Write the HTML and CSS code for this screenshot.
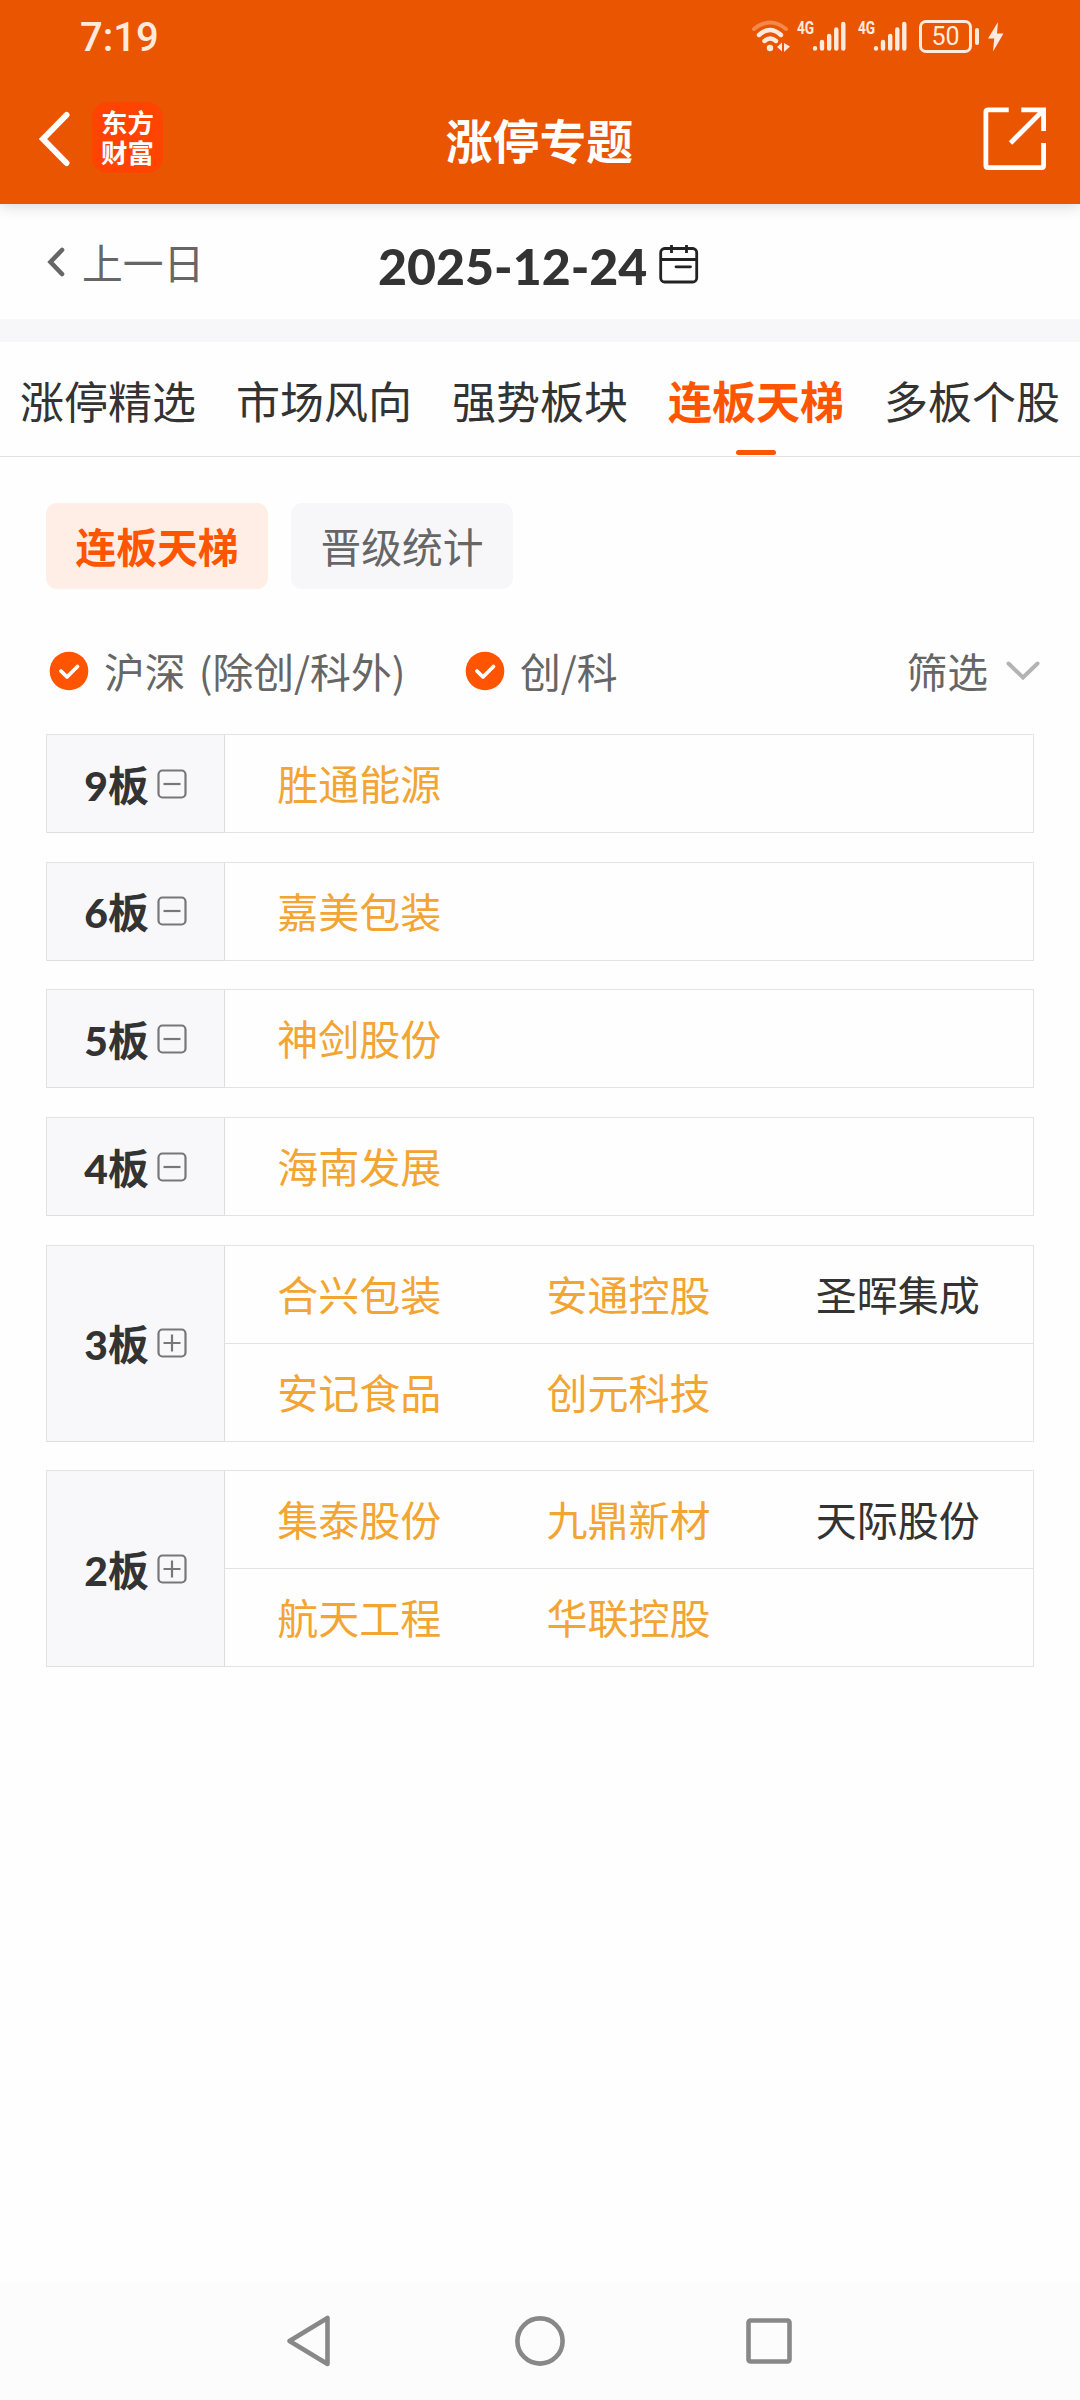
FILE: index.html
```html
<!DOCTYPE html>
<html lang="zh-CN">
<head>
<meta charset="UTF-8">
<meta name="viewport" content="width=device-width, initial-scale=1.0">
<title>涨停专题</title>
<link rel="stylesheet" href="styles.css">
</head>
<body>

<header class="header">
  <div class="status">
    <span class="time">7:19</span>
    <div class="status-icons">
      <svg class="wifi" width="40" height="34" viewBox="0 0 40 34" fill="none" stroke="#ffeadd" stroke-width="4.4" stroke-linecap="round">
        <path d="M3 10 Q19 -3 35 10" stroke="#f5874a" stroke-width="4"/>
        <path d="M8 16 Q19 6 30 16"/>
        <path d="M13.500 22 Q19 17 25 22"/>
        <circle cx="19" cy="29" r="3.200" fill="#ffeadd" stroke="none"/>
        <path d="M26 28 l5 -4.500 v9z M33 24 v9 l6 -5.500z" fill="#ffeadd" stroke="none"/>
      </svg>
      <div class="signal">
        <span>4G</span>
        <svg width="36" height="34" viewBox="0 0 36 34" stroke="#ffeadd" stroke-width="4.400" stroke-linecap="round">
          <path d="M3 29.200 v.4 M10 23 v6.500 M17.200 17 v12.500 M24.300 10.500 v19 M31.300 5 v24.500"/>
        </svg>
      </div>
      <div class="signal">
        <span>4G</span>
        <svg width="36" height="34" viewBox="0 0 36 34" stroke="#ffeadd" stroke-width="4.400" stroke-linecap="round">
          <path d="M3 29.200 v.4 M10 23 v6.500 M17.200 17 v12.500 M24.300 10.500 v19 M31.300 5 v24.500"/>
        </svg>
      </div>
      <div class="battery">50</div>
      <div class="battery-tip"></div>
      <svg class="bolt" width="16" height="30" viewBox="0 0 16 30" fill="#ffeadd">
        <path d="M10 0 L0 16.500 H6.200 L5 29.500 L15.500 11.500 H9z"/>
      </svg>
    </div>
  </div>
  <div class="navbar">
    <div class="nav-left">
      <svg width="32" height="56" viewBox="0 0 32 56" fill="none" stroke="#fff" stroke-width="6">
        <path d="M28.500 4 L5 28 L28.500 52" stroke-linecap="round"/>
      </svg>
      <div class="logo">东方<br>财富</div>
    </div>
    <h1>涨停专题</h1>
    <svg class="share" width="64" height="64" viewBox="0 0 64 64" fill="none" stroke="#fff" stroke-width="4.800">
      <path d="M25.700 2.900 H5 Q2.900 2.900 2.900 5 V58.500 Q2.900 60.600 5 60.600 H58.500 Q60.600 60.600 60.600 58.500 V36"/>
      <path d="M38.300 2.900 H60.600 V24 M60 3.500 L27.500 36"/>
    </svg>
  </div>
</header>

<div class="date-bar">
  <div class="prev">
    <svg width="20" height="32" viewBox="0 0 20 32" fill="none" stroke="#666" stroke-width="4.600" stroke-linecap="round">
      <path d="M16 4 L4.500 16 L16 28"/>
    </svg>
    <span>上一日</span>
  </div>
  <div class="date">
    <span>2025-12-24</span>
    <svg width="40" height="40" viewBox="0 0 40 40" fill="none" stroke="#222" stroke-width="2.800">
      <rect x="1.700" y="4.500" width="36" height="33.500" rx="4"/>
      <path d="M2 15.500 H37 M12.500 1 V9 M27.500 1 V9"/>
      <path d="M17 22.800 H31.500" stroke-linecap="round"/>
    </svg>
  </div>
</div>

<div class="tabs">
  <span>涨停精选</span>
  <span>市场风向</span>
  <span>强势板块</span>
  <span class="active">连板天梯</span>
  <span>多板个股</span>
</div>

<main class="content">
  <div class="chips">
    <span class="chip active">连板天梯</span>
    <span class="chip">晋级统计</span>
  </div>

  <div class="filters">
    <div class="check">
      <svg width="40" height="40" viewBox="0 0 40 40"><circle cx="20" cy="20" r="19.300" fill="#ff5500"/><path d="M12 20 L18 26 L28.500 15.500" fill="none" stroke="#fff" stroke-width="3.800" stroke-linecap="round" stroke-linejoin="round"/></svg>
      <span>沪深 (除创/科外)</span>
    </div>
    <div class="check">
      <svg width="40" height="40" viewBox="0 0 40 40"><circle cx="20" cy="20" r="19.300" fill="#ff5500"/><path d="M12 20 L18 26 L28.500 15.500" fill="none" stroke="#fff" stroke-width="3.800" stroke-linecap="round" stroke-linejoin="round"/></svg>
      <span>创/科</span>
    </div>
    <div class="select">
      <span>筛选</span>
      <svg width="34" height="20" viewBox="0 0 34 20" fill="none" stroke="#b3b3b3" stroke-width="4" stroke-linecap="round"><path d="M2.500 2.500 L17 16.500 L31.500 2.500"/></svg>
    </div>
  </div>

  <div class="ladder" id="ladder"></div>
</main>

<footer class="system-nav">
  <svg width="50" height="60" viewBox="0 0 50 60" fill="none" stroke="#888" stroke-width="4.600" stroke-linejoin="round">
    <path d="M5.500 30 L43.500 7 V53z"/>
  </svg>
  <svg width="60" height="60" viewBox="0 0 60 60" fill="none" stroke="#888" stroke-width="4.600">
    <circle cx="30" cy="30" r="22.600"/>
  </svg>
  <svg width="50" height="60" viewBox="0 0 50 60" fill="none" stroke="#888" stroke-width="4.600">
    <rect x="2.500" y="9.500" width="41" height="41" rx="2"/>
  </svg>
</footer>

<script>
  var levels = [
    { n: 9, open: true, rows: [['胜通能源']] },
    { n: 6, open: true, rows: [['嘉美包装']] },
    { n: 5, open: true, rows: [['神剑股份']] },
    { n: 4, open: true, rows: [['海南发展']] },
    { n: 3, open: false, rows: [['合兴包装', '安通控股', '圣晖集成'], ['安记食品', '创元科技']] },
    { n: 2, open: false, rows: [['集泰股份', '九鼎新材', '天际股份'], ['航天工程', '华联控股']] }
  ];
  // 这些显示为黑色，其余为橙色
  var normal = ['圣晖集成', '天际股份'];

  function toggleIcon(open) {
    return '<svg width="30" height="30" viewBox="0 0 30 30" fill="none" stroke="#777" stroke-width="2.200">' +
      '<rect x="1.500" y="1.500" width="27" height="27" rx="4"/>' +
      '<path d="M6.500 15 H23.500' + (open ? '' : ' M15 6.500 V23.500') + '"/></svg>';
  }

  document.getElementById('ladder').innerHTML = levels.map(function(level) {
    var rows = level.rows.map(function(row) {
      return '<div class="row">' + row.map(function(name) {
        var cls = normal.indexOf(name) >= 0 ? 'stock' : 'stock hot';
        return '<span class="' + cls + '">' + name + '</span>';
      }).join('') + '</div>';
    }).join('');
    return '<div class="level"><div class="level-name"><span><b>' + level.n + '</b>板</span>' +
      toggleIcon(level.open) + '</div><div class="rows">' + rows + '</div></div>';
  }).join('');
</script>

</body>
</html>
```
FILE: styles.css
```css
* {
  box-sizing: border-box;
}
html, body {
  margin: 0;
  padding: 0;
}
body {
  height: 2400px;
  display: flex;
  flex-direction: column;
  background-color: #fefefe;
  color: #333;
  font-family: "Noto Sans CJK SC", sans-serif;
  font-size: 40.8px;
}
svg {
  display: block;
  flex: none;
}

/* 顶部 */
.header {
  height: 204px;
  background-color: #ea5502;
  color: #fff;
  box-shadow: 0 2px 14px rgba(0,0,0,0.16);
}
.status {
  height: 72px;
  padding: 0 76px 0 80px;
  display: flex;
  justify-content: space-between;
  color: #ffeadd;
}
.time {
  font: 500 40px/76px Roboto, sans-serif;
}
.status-icons {
  padding-top: 19px;
  display: flex;
  align-items: flex-start;
}
.wifi {
  margin-right: 6px;
}
.signal {
  width: 61px;
  display: flex;
}
.signal span {
  width: 15px;
  height: 18px;
  font: bold 19px/18px Roboto, sans-serif;
  transform: scaleX(0.72);
  transform-origin: left;
}
.battery {
  width: 53px;
  height: 33px;
  margin-top: 1px;
  border: 3px solid #ffeadd;
  border-radius: 7px;
  font: 25px/27px Roboto, sans-serif;
  text-align: center;
}
.battery-tip {
  width: 4px;
  height: 17px;
  margin: 9px 9px 0 3px;
  border-radius: 2px;
  background-color: #ffeadd;
}
.bolt {
  margin-top: 3px;
}
.navbar {
  height: 132px;
  padding: 2px 33px 0 38px;
  display: flex;
  align-items: center;
  justify-content: space-between;
}
.nav-left {
  flex: 1;
  display: flex;
  align-items: center;
  gap: 22px;
}
.logo {
  width: 71px;
  height: 71px;
  margin-top: -3px;
  padding-top: 5px;
  border-radius: 16px;
  background-color: #ff4300;
  font-size: 26.500px;
  font-weight: bold;
  line-height: 30px;
  text-align: center;
}
h1 {
  margin: 0;
  font-size: 46.800px;
  font-weight: bold;
  line-height: 60px;
}
.navbar .share {
  margin-left: 350px;
}

/* 日期 */
.date-bar {
  height: 115px;
  padding-left: 46px;
  display: flex;
  align-items: center;
}
.prev {
  width: 332px;
  display: flex;
  align-items: center;
  gap: 16px;
  color: #666;
}
.prev span {
  line-height: 60px;
}
.date {
  display: flex;
  align-items: center;
  gap: 12px;
  padding-top: 4px;
}
.date span {
  font: 900 50px/60px Lato, sans-serif;
  padding-top: 5px;
}

/* 标签页 */
.tabs {
  height: 138px;
  padding: 0 20px;
  border-top: 23px solid #f7f7fa;
  border-bottom: 1px solid #e0e0e0;
  display: flex;
  gap: 40px;
  font-size: 44px;
  line-height: 117px;
  white-space: nowrap;
}
.tabs .active {
  position: relative;
  color: #ff5500;
  font-weight: bold;
}
.tabs .active::after {
  content: "";
  position: absolute;
  left: 68px;
  bottom: 1px;
  width: 40px;
  height: 5px;
  border-radius: 3px;
  background-color: #ff5500;
}

.content {
  flex: 1;
  padding: 46px 46px 0;
}
.chips {
  display: flex;
  gap: 23px;
}
.chip {
  width: 222px;
  height: 86px;
  border-radius: 11px;
  background-color: #f7f7fa;
  color: #666;
  line-height: 86px;
  text-align: center;
}
.chip.active {
  background-color: #ffeee6;
  color: #ff5500;
  font-weight: bold;
}
.filters {
  height: 60px;
  margin: 52px -6px 33px 3px;
  display: flex;
  align-items: center;
  color: #666;
  line-height: 60px;
}
.check {
  width: 416px;
  display: flex;
  align-items: center;
  gap: 15px;
  white-space: nowrap;
}
.check:first-child span {
  word-spacing: 4px;
}
.select {
  margin-left: auto;
  display: flex;
  align-items: center;
  gap: 18px;
}

/* 连板天梯 */
.ladder {
  display: flex;
  flex-direction: column;
  gap: 28.700px;
}
.level {
  display: flex;
  border: 1px solid #e3e3e3;
  border-bottom: none;
}
.level-name {
  width: 178px;
  display: flex;
  align-items: center;
  justify-content: center;
  gap: 8px;
  background-color: #f8f8fb;
  border-right: 1px solid #dedede;
  border-bottom: 1px solid #dedede;
  font-weight: bold;
}
.level-name span {
  margin-top: -1px;
}
.level-name b {
  font-family: Lato, sans-serif;
  font-weight: 900;
}
.rows {
  flex: 1;
}
.row {
  height: 98px;
  display: grid;
  grid-template-columns: repeat(3, 1fr);
  border-bottom: 1px solid #e3e3e3;
  font-size: 41px;
  line-height: 95px;
  text-align: center;
}
.stock {
  padding-right: 1px;
}
.stock.hot {
  color: #f2a533;
}

/* 系统导航 */
.system-nav {
  height: 118px;
  padding: 0 284px;
  display: flex;
  align-items: center;
  justify-content: space-between;
  background-color: #fcfcfc;
}
```
